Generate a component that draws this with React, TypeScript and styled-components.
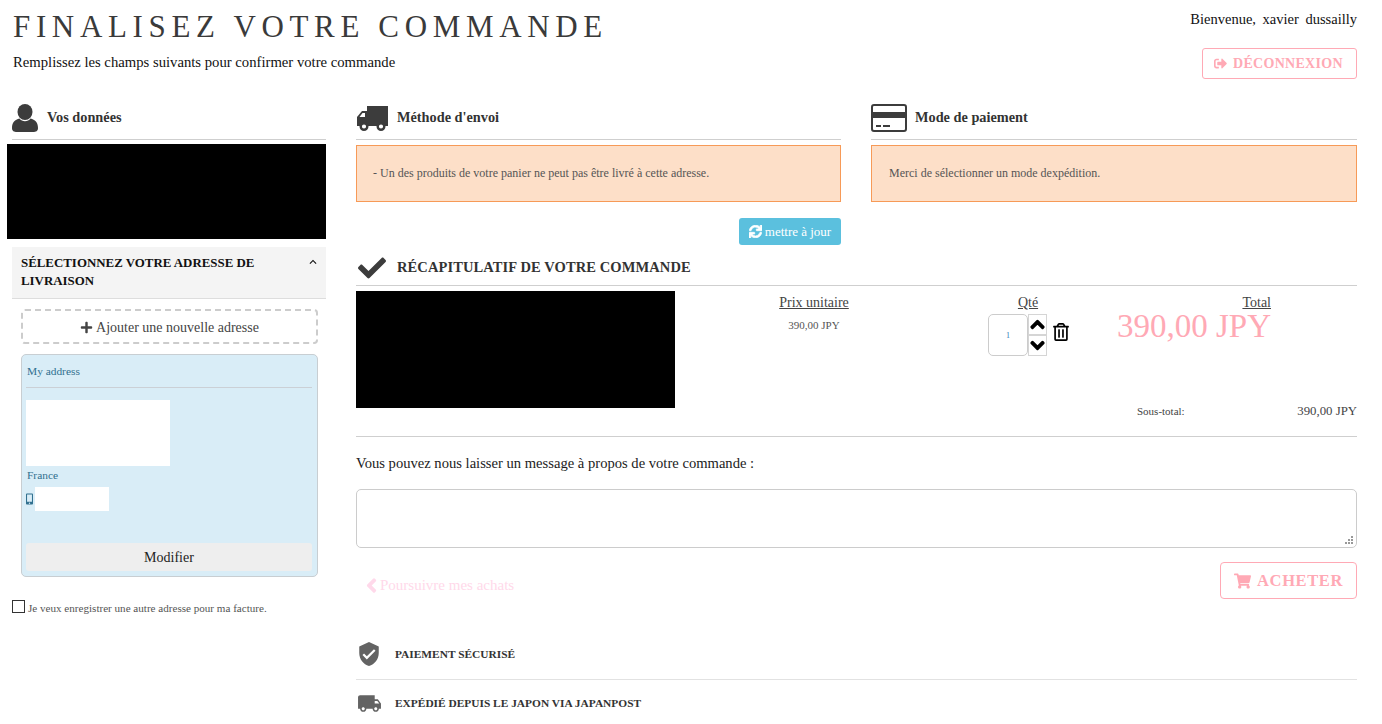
import React from "react";
import styled, { createGlobalStyle } from "styled-components";
import {
  FaCheck,
  FaChevronDown,
  FaChevronLeft,
  FaChevronUp,
  FaMobileAlt,
  FaPlus,
  FaRegTrashAlt,
  FaShoppingCart,
  FaSignOutAlt,
  FaSync,
} from "react-icons/fa";
import { MdKeyboardArrowUp, MdLocalShipping, MdVerifiedUser } from "react-icons/md";

const PINK = "#ffa9b5";
const LINE = "#cfcfcf";
const DARK = "#3c3c3c";

const GlobalStyle = createGlobalStyle`
  html, body {
    margin: 0;
    padding: 0;
    overflow: hidden;
    background: #fff;
    font-family: "Liberation Serif", "Times New Roman", serif;
    color: #333;
  }
  *, *:before, *:after {
    box-sizing: border-box;
  }
`;

const Page = styled.div`
  width: 1382px;
  height: 724px;
  padding: 0 25px 0 12px;
  overflow: hidden;
`;

const Header = styled.header`
  display: flex;
  justify-content: space-between;
  height: 104px;
`;

const Title = styled.h1`
  margin: 0;
  padding: 9px 0 0 1px;
  font-size: 31px;
  line-height: 36px;
  font-weight: 400;
  letter-spacing: 5.65px;
  white-space: nowrap;
  color: #3a3a3a;
`;

const Subtitle = styled.p`
  margin: 8px 0 0 1px;
  font-size: 14.7px;
  line-height: 18px;
  color: #111;
`;

const Account = styled.div`
  display: flex;
  flex-direction: column;
  align-items: flex-end;
`;

const Welcome = styled.div`
  margin-top: 10px;
  font-size: 14.5px;
  line-height: 18px;
  word-spacing: 3px;
  color: #111;
`;

const LogoutButton = styled.button`
  display: flex;
  align-items: center;
  gap: 6px;
  margin-top: 20px;
  width: 155px;
  height: 31px;
  padding: 0 0 0 11px;
  background: #fff;
  border: 1px solid ${PINK};
  border-radius: 3px;
  color: ${PINK};
  font: 700 14px "Liberation Serif", serif;
  letter-spacing: 0.3px;
  svg {
    width: 13px;
    height: 13px;
  }
`;

const Columns = styled.div`
  display: grid;
  grid-template-columns: 314px 1001px;
  column-gap: 30px;
`;

const SectionHead = styled.div`
  display: flex;
  align-items: center;
  height: 36px;
  padding-bottom: 8px;
  border-bottom: 1px solid ${LINE};
  font-size: 14.3px;
  font-weight: 700;
  color: #333;
`;

const IconSlot = styled.span<{ $width: number; $left?: number }>`
  display: flex;
  align-items: center;
  flex: 0 0 ${(p) => p.$width}px;
  margin-top: 1px;
  padding-left: ${(p) => p.$left ?? 0}px;
  color: ${DARK};
`;

const UserIcon = () => (
  <svg width="26" height="28" viewBox="0 0 26 28" fill={DARK}>
    <ellipse cx="13" cy="8" rx="7.5" ry="8" />
    <path d="M0 24C0 18.500 3 15.500 7.500 14.500C10 18 16 18 18.500 14.500C23 15.500 26 18.500 26 24C26 27 24 28 21 28H5C2 28 0 27 0 24Z" />
  </svg>
);

const TruckIcon = () => (
  <svg width="31" height="25" viewBox="0 0 31 25" fill={DARK}>
    <path d="M10 0H31V20H10Z" />
    <path d="M10 5H5L0 11V20H10Z" />
    <path d="M8 7H5.500L2.500 11H8Z" fill="#fff" />
    <circle cx="7" cy="20.500" r="3.300" fill="#fff" stroke={DARK} strokeWidth="2.400" />
    <circle cx="24" cy="20.500" r="3.300" fill="#fff" stroke={DARK} strokeWidth="2.400" />
  </svg>
);

const CardIcon = () => (
  <svg width="36" height="28" viewBox="0 0 36 28" fill={DARK}>
    <rect x="1" y="1" width="34" height="26" rx="2" fill="none" stroke={DARK} strokeWidth="2" />
    <rect x="1" y="8" width="34" height="6" />
    <rect x="5" y="21" width="5" height="2" />
    <rect x="12" y="21" width="7" height="2" />
  </svg>
);

const Redacted = styled.div`
  background: #000;
`;

const UserBlock = styled(Redacted)`
  width: 319px;
  height: 95px;
  margin: 4px 0 8px -5px;
`;

const Accordion = styled.div`
  display: flex;
  justify-content: space-between;
  height: 52px;
  padding: 7px 6px 0 9px;
  background: #f4f4f4;
  border-bottom: 1px solid #ddd;
  font-size: 12.9px;
  line-height: 18px;
  font-weight: 700;
  color: #111;
  svg {
    flex: none;
    margin-top: 1px;
  }
`;

const AddressPanel = styled.div`
  padding: 10px 8px 0 9px;
`;

const AddButton = styled.div`
  display: flex;
  align-items: center;
  justify-content: center;
  gap: 3px;
  height: 35px;
  padding-top: 2px;
  border: 2px dashed #ccc;
  border-radius: 4px;
  font-size: 14px;
  color: #444;
`;

const AddressCard = styled.div`
  display: flex;
  flex-direction: column;
  height: 223px;
  margin-top: 10px;
  padding: 0 5px 0 4px;
  background: #d9edf7;
  border: 1px solid #c8ced2;
  border-radius: 5px;
  color: #31708f;
  font-size: 11.4px;
`;

const CardTitle = styled.div`
  height: 33px;
  padding: 9px 0 0 1px;
  line-height: 14px;
  border-bottom: 1px solid #cbd0d6;
`;

const WhiteBlock = styled.div<{ $width: number; $height: number }>`
  width: ${(p) => p.$width}px;
  height: ${(p) => p.$height}px;
  background: #fff;
`;

const AddressBody = styled(WhiteBlock)`
  margin-top: 12px;
`;

const Country = styled.div`
  height: 21px;
  padding: 2px 0 0 1px;
  line-height: 14px;
`;

const PhoneRow = styled.div`
  display: flex;
  align-items: center;
  gap: 2px;
  svg {
    width: 7px;
    height: 12px;
  }
`;

const EditButton = styled.div`
  display: flex;
  align-items: center;
  justify-content: center;
  height: 28px;
  margin-top: 32px;
  padding-top: 2px;
  background: #eee;
  border-radius: 3px;
  font-size: 14px;
  color: #222;
`;

const InvoiceOption = styled.label`
  display: flex;
  align-items: flex-start;
  gap: 3px;
  margin-top: 23px;
  font-size: 11.1px;
  line-height: 14px;
  color: #555;
`;

const InvoiceText = styled.span`
  margin-top: 1px;
`;

const Box = styled.span`
  flex: none;
  width: 13px;
  height: 13px;
  border: 1px solid #333;
`;

const TopRow = styled.div`
  display: grid;
  grid-template-columns: 485px 486px;
  column-gap: 30px;
`;

const Alert = styled.div<{ $pad: number }>`
  display: flex;
  align-items: center;
  height: 57px;
  margin-top: 5px;
  padding-left: ${(p) => p.$pad}px;
  background: #fddfc8;
  border: 1px solid #f79a57;
  color: #555;
  font-size: 12px;
`;

const UpdateRow = styled.div`
  display: flex;
  justify-content: flex-end;
  margin-top: 16px;
`;

const UpdateButton = styled.div`
  display: flex;
  align-items: center;
  justify-content: center;
  gap: 3px;
  width: 102px;
  height: 27px;
  background: #5bc0de;
  border-radius: 3px;
  color: #fff;
  font-size: 13px;
  svg {
    stroke: currentColor;
    stroke-width: 30px;
  }
`;

const RecapHead = styled(SectionHead)`
  height: 37px;
  margin-top: 4px;
  padding-bottom: 0;
  font-size: 14.5px;
  letter-spacing: 0.1px;
`;

const ProductRow = styled.div`
  display: grid;
  grid-template-columns: 319px 278px 150px 168px;
  height: 117px;
  margin-top: 5px;
`;

const ProductImage = styled(Redacted)`
  height: 117px;
`;

const ColumnHead = styled.div`
  margin-top: 4px;
  font-size: 14px;
  line-height: 15px;
  text-decoration: underline;
  color: #444;
`;

const PriceCell = styled.div`
  text-align: center;
`;

const UnitPrice = styled.div`
  margin-top: 8px;
  font-size: 11px;
  line-height: 14px;
  color: #555;
`;

const QuantityCell = styled.div`
  text-align: center;
`;

const Stepper = styled.div`
  display: flex;
  align-items: flex-start;
  margin-top: 4px;
  padding-left: 35px;
`;

const QtyField = styled.div`
  display: flex;
  align-items: center;
  justify-content: center;
  width: 40px;
  height: 42px;
  border: 1px solid #ccc;
  border-radius: 5px;
  font-size: 8px;
  color: #337ab7;
`;

const SpinColumn = styled.div`
  display: flex;
  flex-direction: column;
  width: 19px;
`;

const SpinButton = styled.div`
  display: flex;
  align-items: center;
  justify-content: center;
  height: 21px;
  border: 1px solid #d5d5d5;
  color: #000;
  svg {
    width: 15px;
    height: 15px;
    stroke: currentColor;
    stroke-width: 50px;
  }
`;

const Trash = styled.span`
  margin: 9px 0 0 6px;
  color: #000;
  svg {
    display: block;
    width: 16px;
    height: 18px;
  }
`;

const TotalCell = styled.div`
  text-align: right;
`;

const BigPrice = styled.div`
  font-size: 33px;
  line-height: 32px;
  white-space: nowrap;
  color: ${PINK};
`;

const SubtotalRow = styled.div`
  display: flex;
  justify-content: space-between;
  align-items: flex-start;
  height: 32px;
  margin: -4px 0 0 781px;
  font-size: 11px;
  line-height: 14px;
  color: #444;
  span:last-child {
    font-size: 12.8px;
  }
`;

const Divider = styled.hr`
  margin: 0;
  border: 0;
  border-top: 1px solid ${LINE};
`;

const MessageLabel = styled.div`
  margin-top: 18px;
  font-size: 14.6px;
  line-height: 17px;
  color: #222;
`;

const MessageBox = styled.div`
  position: relative;
  height: 59px;
  margin-top: 17px;
  border: 1px solid #ccc;
  border-radius: 5px;
`;

const Grip = styled.svg`
  position: absolute;
  right: 2px;
  bottom: 2px;
  width: 9px;
  height: 9px;
  fill: #999;
`;

const Actions = styled.div`
  display: flex;
  justify-content: space-between;
  align-items: flex-start;
  margin-top: 14px;
`;

const BackLink = styled.div`
  display: flex;
  align-items: center;
  gap: 3px;
  height: 18px;
  margin: 14px 0 0 10px;
  font-size: 15px;
  color: #ffd9ea;
  svg {
    width: 11px;
    height: 15px;
    stroke: currentColor;
    stroke-width: 50px;
  }
`;

const BuyButton = styled.div`
  display: flex;
  align-items: center;
  justify-content: center;
  gap: 6px;
  width: 137px;
  height: 37px;
  border: 1px solid ${PINK};
  border-radius: 4px;
  color: ${PINK};
  font-size: 16.5px;
  letter-spacing: 0.6px;
  font-weight: 700;
  svg {
    width: 17px;
    height: 16px;
  }
`;

const Assurance = styled.div`
  display: flex;
  flex-direction: column;
  margin-top: 31px;
`;

const AssuranceRow = styled.div<{ $line?: boolean }>`
  display: flex;
  align-items: center;
  height: ${(p) => (p.$line ? 50 : 46)}px;
  padding-bottom: ${(p) => (p.$line ? 2 : 0)}px;
  border-bottom: ${(p) => (p.$line ? "1px solid #e2e2e2" : "0")};
  font-size: 11.4px;
  font-weight: 700;
  color: #333;
`;

const AssuranceIcon = styled.span`
  display: flex;
  align-items: center;
  justify-content: center;
  flex: 0 0 39px;
  padding-right: 13px;
  color: #636363;
`;

export default function App() {
  return (
    <Page>
      <GlobalStyle />
      <Header>
        <div>
          <Title>FINALISEZ VOTRE COMMANDE</Title>
          <Subtitle>Remplissez les champs suivants pour confirmer votre commande</Subtitle>
        </div>
        <Account>
          <Welcome>Bienvenue, xavier dussailly</Welcome>
          <LogoutButton>
            <FaSignOutAlt />
            DÉCONNEXION
          </LogoutButton>
        </Account>
      </Header>

      <Columns>
        <aside>
          <SectionHead>
            <IconSlot $width={35}>
              <UserIcon />
            </IconSlot>
            Vos données
          </SectionHead>
          <UserBlock />
          <Accordion>
            <span>SÉLECTIONNEZ VOTRE ADRESSE DE LIVRAISON</span>
            <MdKeyboardArrowUp size={14} />
          </Accordion>
          <AddressPanel>
            <AddButton>
              <FaPlus size={13} />
              Ajouter une nouvelle adresse
            </AddButton>
            <AddressCard>
              <CardTitle>My address</CardTitle>
              <AddressBody $width={144} $height={66} />
              <Country>France</Country>
              <PhoneRow>
                <FaMobileAlt />
                <WhiteBlock $width={74} $height={24} />
              </PhoneRow>
              <EditButton>Modifier</EditButton>
            </AddressCard>
          </AddressPanel>
          <InvoiceOption>
            <Box />
            <InvoiceText>Je veux enregistrer une autre adresse pour ma facture.</InvoiceText>
          </InvoiceOption>
        </aside>

        <main>
          <TopRow>
            <div>
              <SectionHead>
                <IconSlot $width={41} $left={1}>
                  <TruckIcon />
                </IconSlot>
                Méthode d'envoi
              </SectionHead>
              <Alert $pad={16}>- Un des produits de votre panier ne peut pas être livré à cette adresse.</Alert>
              <UpdateRow>
                <UpdateButton>
                  <FaSync size={13} />
                  mettre à jour
                </UpdateButton>
              </UpdateRow>
            </div>
            <div>
              <SectionHead>
                <IconSlot $width={44}>
                  <CardIcon />
                </IconSlot>
                Mode de paiement
              </SectionHead>
              <Alert $pad={17}>Merci de sélectionner un mode dexpédition.</Alert>
            </div>
          </TopRow>

          <RecapHead>
            <IconSlot $width={41} $left={2}>
              <FaCheck size={28} />
            </IconSlot>
            RÉCAPITULATIF DE VOTRE COMMANDE
          </RecapHead>

          <ProductRow>
            <ProductImage />
            <PriceCell>
              <ColumnHead>Prix unitaire</ColumnHead>
              <UnitPrice>390,00 JPY</UnitPrice>
            </PriceCell>
            <QuantityCell>
              <ColumnHead>Qté</ColumnHead>
              <Stepper>
                <QtyField>1</QtyField>
                <SpinColumn>
                  <SpinButton>
                    <FaChevronUp />
                  </SpinButton>
                  <SpinButton>
                    <FaChevronDown />
                  </SpinButton>
                </SpinColumn>
                <Trash>
                  <FaRegTrashAlt />
                </Trash>
              </Stepper>
            </QuantityCell>
            <TotalCell>
              <ColumnHead>Total</ColumnHead>
              <BigPrice>390,00 JPY</BigPrice>
            </TotalCell>
          </ProductRow>

          <SubtotalRow>
            <span>Sous-total:</span>
            <span>390,00 JPY</span>
          </SubtotalRow>
          <Divider />

          <MessageLabel>Vous pouvez nous laisser un message à propos de votre commande :</MessageLabel>
          <MessageBox>
            <Grip viewBox="0 0 9 9">
              <rect x="6" y="0" width="2" height="2" />
              <rect x="3" y="3" width="2" height="2" />
              <rect x="6" y="3" width="2" height="2" />
              <rect x="0" y="6" width="2" height="2" />
              <rect x="3" y="6" width="2" height="2" />
              <rect x="6" y="6" width="2" height="2" />
            </Grip>
          </MessageBox>

          <Actions>
            <BackLink>
              <FaChevronLeft />
              Poursuivre mes achats
            </BackLink>
            <BuyButton>
              <FaShoppingCart />
              ACHETER
            </BuyButton>
          </Actions>

          <Assurance>
            <AssuranceRow $line>
              <AssuranceIcon>
                <MdVerifiedUser size={26} />
              </AssuranceIcon>
              PAIEMENT SÉCURISÉ
            </AssuranceRow>
            <AssuranceRow>
              <AssuranceIcon>
                <MdLocalShipping size={25} />
              </AssuranceIcon>
              EXPÉDIÉ DEPUIS LE JAPON VIA JAPANPOST
            </AssuranceRow>
          </Assurance>
        </main>
      </Columns>
    </Page>
  );
}
